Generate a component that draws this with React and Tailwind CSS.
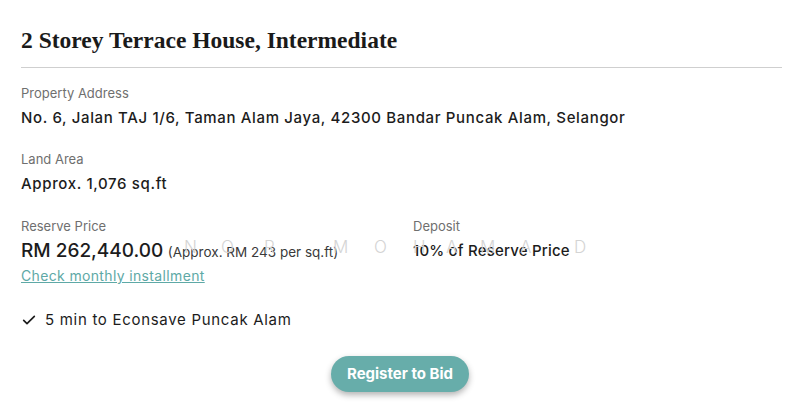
import React from 'react';

const watermark = [
  ['N', 184], ['O', 221], ['R', 264], ['M', 333], ['O', 374],
  ['H', 413], ['A', 446], ['M', 480], ['A', 520], ['D', 574],
];

function Field({ label, children }) {
  return (
    <div>
      <div className="text-[13px] leading-5 text-[#6f6f6f]">{label}</div>
      <div className="mt-[3px] text-[15px] leading-6 text-[#1c1c1c] font-medium tracking-[0.65px]">{children}</div>
    </div>
  );
}

export default function App() {
  const sans = { fontFamily: 'Inter, "Noto Sans", sans-serif' };
  return (
    <div className="w-[800px] h-[412px] bg-white relative overflow-hidden" style={sans}>
      <div className="px-[21px] pt-[24px]">
        <h1 className="text-[23.5px] leading-8 font-bold text-[#1a1a1a]" style={{ fontFamily: '"Liberation Serif", serif' }}>
          2 Storey Terrace House, Intermediate
        </h1>
        <div className="mt-[11px] mr-[-3px] h-px bg-[#cfcfcf]" />

        <div className="mt-[15px] flex flex-col gap-[19px]">
          <Field label="Property Address">
            No. 6, Jalan TAJ 1/6, Taman Alam Jaya, 42300 Bandar Puncak Alam, Selangor
          </Field>
          <Field label="Land Area">Approx. 1,076 sq.ft</Field>

          <div className="grid grid-cols-[392px_1fr] relative mt-[1px]">
            <div>
              <div className="text-[13px] leading-5 text-[#6f6f6f]">Reserve Price</div>
              <div className="mt-[3px] text-[#1c1c1c] leading-6">
                <span className="text-[19px] font-medium">RM 262,440.00</span>{' '}
                <span className="text-[13.5px] text-[#3a3a3a]">(Approx. RM 243 per sq.ft)</span>
              </div>
              <a href="#" className="mt-[2px] block text-[14px] leading-5 text-[#5ea9a6] underline tracking-[0.35px]">Check monthly installment</a>
            </div>
            <div>
              <div className="text-[13px] leading-5 text-[#6f6f6f]">Deposit</div>
              <div className="mt-[3px] text-[15px] leading-6 text-[#1c1c1c] font-medium tracking-[0.2px]">10% of Reserve Price</div>
            </div>
            {watermark.map(([ch, x], i) => (
              <span
                key={i}
                className="absolute top-[19px] text-[17px] font-light text-[#d4d4d4] pointer-events-none select-none"
                style={{ left: x - 21 }}
              >
                {ch}
              </span>
            ))}
          </div>

          <div className="mt-[3px] flex items-center gap-2 text-[15px] leading-6 text-[#1c1c1c] tracking-[0.7px]">
            <svg width="16" height="16" viewBox="0 0 24 24" fill="none" stroke="#1c1c1c" strokeWidth="2.5" strokeLinecap="round" strokeLinejoin="round">
              <path d="M4 12.5l5 5L20 6.5" />
            </svg>
            <span>5 min to Econsave Puncak Alam</span>
          </div>
        </div>

        <div className="flex justify-center mt-[24px]">
          <button className="h-[36px] px-[16px] rounded-full bg-[#67adaa] text-white text-[15px] font-bold shadow-[0_3px_6px_rgba(0,0,0,0.3)]">
            Register to Bid
          </button>
        </div>
      </div>
    </div>
  );
}
